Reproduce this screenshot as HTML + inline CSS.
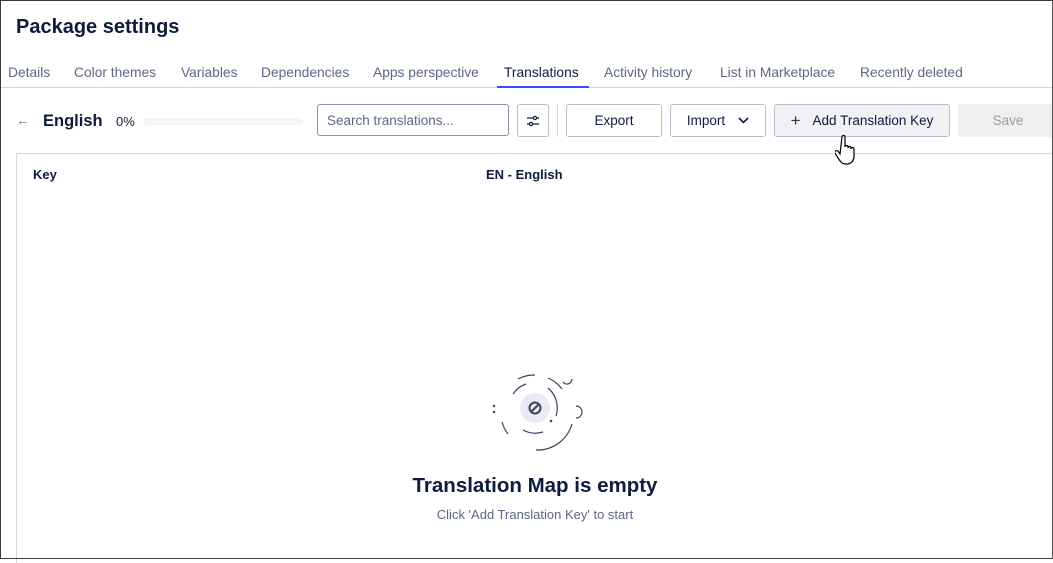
<!DOCTYPE html>
<html><head><style>
*{box-sizing:border-box;margin:0;padding:0}
body{width:1053px;height:559px;overflow:hidden;background:#fff;font-family:"Liberation Sans",sans-serif;color:#0d1b3e;position:relative}
.frame{position:absolute;left:0;top:0;width:1053px;height:559px;border:1px solid #3a3a3a;border-right-color:#555;pointer-events:none;z-index:5}
.abs{position:absolute;white-space:nowrap}
h1{position:absolute;left:16px;top:16px;font-size:20px;font-weight:bold;color:#0d1b3e}
.tab{position:absolute;top:65px;font-size:13.8px;color:#5d6785}
.btn{position:absolute;top:104px;height:33px;border:1px solid #b9bccb;border-radius:3px;font-size:13.5px;display:flex;align-items:center;justify-content:center;color:#0d1b3e;background:#fff}
</style></head><body>
<div class="frame"></div>
<h1>Package settings</h1>
<div class="tab" style="left:8px">Details</div>
<div class="tab" style="left:74px">Color themes</div>
<div class="tab" style="left:181px">Variables</div>
<div class="tab" style="left:261px">Dependencies</div>
<div class="tab" style="left:373px">Apps perspective</div>
<div class="tab" style="left:504px;color:#0d1b3e">Translations</div>
<div class="tab" style="left:604px">Activity history</div>
<div class="tab" style="left:720px">List in Marketplace</div>
<div class="tab" style="left:860px">Recently deleted</div>
<div class="abs" style="left:0;top:87px;width:1053px;height:1px;background:#d5d7e0"></div>
<div class="abs" style="left:497px;top:86px;width:92px;height:2px;background:#2b50ff"></div>

<div class="abs" style="left:16px;top:112px;font-size:14px;color:#6b7390">←</div>
<div class="abs" style="left:43px;top:112px;font-size:16.5px;font-weight:bold">English</div>
<div class="abs" style="left:116px;top:114px;font-size:13px">0%</div>
<div class="abs" style="left:143px;top:118px;width:160px;height:7px;border-radius:4px;background:#f3f4f7"></div>
<div class="abs" style="left:317px;top:104px;width:192px;height:32px;border:1px solid #8d91a8;border-radius:3px;font-size:13.5px;color:#5d6785;padding:8px 9px">Search translations...</div>
<div class="btn" style="left:517px;width:32px"><svg width="14" height="14" viewBox="0 0 14 14" fill="none" stroke="#0d1b3e" stroke-width="1.2"><path d="M1 4h12M1 10h12"/><circle cx="9" cy="4" r="1.6" fill="#fff"/><circle cx="5" cy="10" r="1.6" fill="#fff"/></svg></div>
<div class="abs" style="left:557px;top:104px;width:1px;height:33px;background:#d5d7e0"></div>
<div class="btn" style="left:566px;width:96px">Export</div>
<div class="btn" style="left:670px;width:96px">Import<svg style="margin-left:13px" width="11" height="7" viewBox="0 0 11 7" fill="none" stroke="#0d1b3e" stroke-width="1.6"><path d="M1 1l4.5 4.5L10 1"/></svg></div>
<div class="btn" style="left:774px;width:176px;background:#f1f1f6"><span style="font-size:17px;margin-right:12px;color:#333">+</span>Add Translation Key</div>
<div class="btn" style="left:958px;width:100px;border-color:#efefef;background:#efefef;color:#9a9ca6">Save</div>

<div class="abs" style="left:16px;top:153px;width:1040px;height:410px;border:1px solid #d5d7e0;border-right:none;border-bottom:none"></div>
<div class="abs" style="left:33px;top:167px;font-size:13px;font-weight:bold">Key</div>
<div class="abs" style="left:486px;top:167px;font-size:13px;font-weight:bold">EN - English</div>

<svg class="abs" style="left:488px;top:366px" width="96" height="88" viewBox="0 0 96 88" fill="none" stroke="#3b4263" stroke-width="1.2">
<circle cx="47" cy="42" r="15" fill="#ebebf3" stroke="none"/>
<circle cx="47" cy="42" r="5.5" stroke-width="2"/><path d="M43 46l8-8" stroke-width="2"/>
<path d="M38 18a26 26 0 0 0-13 10M60 22a26 26 0 0 1 8 28M55 66a26 26 0 0 1-20-2"/>
<path d="M30 13a34 34 0 0 1 17-4M60 12a34 34 0 0 1 14 11M84 58a36 36 0 0 1-36 26M20 68a34 34 0 0 1-6-12"/>
<path d="M75 16a5 5 0 0 0 9 -3M88 40a6 6 0 0 1 0 12"/>
<circle cx="6" cy="40" r="1.2" fill="#3b4263" stroke="none"/><circle cx="6" cy="46" r="1.2" fill="#3b4263" stroke="none"/><circle cx="63" cy="55" r="1.3" fill="#3b4263" stroke="none"/>
</svg>
<div class="abs" style="left:0;width:1070px;text-align:center;top:474px;font-size:20.5px;font-weight:bold">Translation Map is empty</div>
<div class="abs" style="left:0;width:1070px;text-align:center;top:507px;font-size:13px;color:#5d6785">Click 'Add Translation Key' to start</div>

<svg class="abs" style="left:835px;top:134px" width="24" height="34" viewBox="0 0 24 34"><path d="M7 3c0-2 3-2 3 0v10c0-2 3-2 3 0v1c0-2 3-2 3 0v1c0-2 3-2 3 0v7c0 4-2 7-6 8h-3c-3 0-5-3-7-6l-3-5c-1-2 1-3 3-2l2 3z" fill="#fff" stroke="#000" stroke-width="1.2"/></svg>
</body></html>
